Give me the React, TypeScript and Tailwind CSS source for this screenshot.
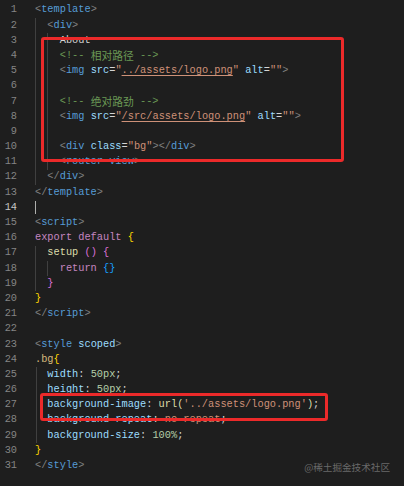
import React from "react";

type Tok = [string, string, boolean?];

const P = "#808080";
const TAG = "#569cd6";
const ATTR = "#9cdcfe";
const STR = "#ce9178";
const CMT = "#6a9955";
const TXT = "#d4d4d4";
const KW = "#c586c0";
const FN = "#dcdcaa";
const B1 = "#ffd700";
const B2 = "#da70d6";
const B3 = "#179fff";
const SEL = "#d7ba7d";
const NUM = "#b5cea8";

const sp = (n: number): Tok => [" ".repeat(n), TXT];

const lines: Tok[][] = [
  [["<", P], ["template", TAG], [">", P]],
  [sp(2), ["<", P], ["div", TAG], [">", P]],
  [sp(4), ["About", TXT]],
  [sp(4), ["<!-- ", CMT], ["相对路径", CMT + "|cjk"], [" -->", CMT]],
  [sp(4), ["<", P], ["img", TAG], [" ", TXT], ["src", ATTR], ["=", TXT], ['"', STR], ["../assets/logo.png", STR, true], ['"', STR], [" ", TXT], ["alt", ATTR], ["=", TXT], ['""', STR], [">", P]],
  [],
  [sp(4), ["<!-- ", CMT], ["绝对路劲", CMT + "|cjk"], [" -->", CMT]],
  [sp(4), ["<", P], ["img", TAG], [" ", TXT], ["src", ATTR], ["=", TXT], ['"', STR], ["/src/assets/logo.png", STR, true], ['"', STR], [" ", TXT], ["alt", ATTR], ["=", TXT], ['""', STR], [">", P]],
  [],
  [sp(4), ["<", P], ["div", TAG], [" ", TXT], ["class", ATTR], ["=", TXT], ['"bg"', STR], ["></", P], ["div", TAG], [">", P]],
  [sp(4), ["<", P], ["router-view", TAG], [">", P]],
  [sp(2), ["</", P], ["div", TAG], [">", P]],
  [["</", P], ["template", TAG], [">", P]],
  [],
  [["<", P], ["script", TAG], [">", P]],
  [["export", KW], [" ", TXT], ["default", KW], [" ", TXT], ["{", B1]],
  [sp(2), ["setup", FN], [" ", TXT], ["()", B2], [" ", TXT], ["{", B2]],
  [sp(4), ["return", KW], [" ", TXT], ["{}", B3]],
  [sp(2), ["}", B2]],
  [["}", B1]],
  [["</", P], ["script", TAG], [">", P]],
  [],
  [["<", P], ["style", TAG], [" ", TXT], ["scoped", ATTR], [">", P]],
  [[".bg", SEL], ["{", B1]],
  [sp(2), ["width", ATTR], [": ", TXT], ["50px", NUM], [";", TXT]],
  [sp(2), ["height", ATTR], [": ", TXT], ["50px", NUM], [";", TXT]],
  [sp(2), ["background-image", ATTR], [": ", TXT], ["url(", FN], ["'../assets/logo.png'", STR], [")", FN], [";", TXT]],
  [sp(2), ["background-repeat", ATTR], [": ", TXT], ["no-repeat", STR], [";", TXT]],
  [sp(2), ["background-size", ATTR], [": ", TXT], ["100%", NUM], [";", TXT]],
  [["}", B1]],
  [["</", P], ["style", TAG], [">", P]],
];

// indent guides: [lineIndexStart, lineIndexEnd (inclusive), x]
const guides: [number, number, number][] = [
  [1, 11, 35],
  [2, 10, 47],
  [16, 18, 35],
  [17, 17, 47],
  [24, 28, 36],
];

const LH = 15.2;
const TOP = 2.4;

export default function App() {
  return (
    <div
      className="relative w-[404px] h-[486px] overflow-hidden bg-[#1e1e1e]"
      style={{ fontFamily: '"Liberation Mono", "DejaVu Sans Mono", monospace' }}
    >
      <div className="pt-[2.4px]">
        {lines.map((toks, i) => (
          <div key={i} className="flex h-[15.2px] leading-[15.2px] text-[10.3px] whitespace-pre">
            <div
              className={`w-[17px] text-right shrink-0 ${i === 13 ? "text-[#c6c6c6]" : "text-[#858585]"}`}
            >
              {i + 1}
            </div>
            <div className="pl-[18px] flex">
              {toks.map((t, j) => {
                const [text, colorRaw, underline] = t;
                const cjk = colorRaw.endsWith("|cjk");
                const color = colorRaw.replace("|cjk", "");
                return (
                  <span
                    key={j}
                    className={`${underline ? "underline decoration-[#ce9178] underline-offset-[2px]" : ""} ${cjk ? "text-[10.8px]" : ""}`}
                    style={{
                      color,
                      fontFamily: cjk ? '"Noto Sans CJK SC", sans-serif' : undefined,
                    }}
                  >
                    {text}
                  </span>
                );
              })}
            </div>
          </div>
        ))}
      </div>

      {/* indent guides */}
      {guides.map(([a, b, x], k) => (
        <div
          key={k}
          className="absolute w-px bg-[#404040]"
          style={{ left: x, top: TOP + a * LH, height: (b - a + 1) * LH }}
        />
      ))}

      {/* cursor on line 14 */}
      <div className="absolute w-px bg-[#aeafad]" style={{ left: 35, top: TOP + 13 * LH + 1, height: LH - 2 }} />

      {/* red highlight boxes */}
      <div className="absolute left-[41px] top-[37px] w-[303px] h-[125px] border-[3px] border-[#ec2a2a] rounded-[3px]" />
      <div className="absolute left-[40px] top-[393px] w-[288px] h-[28px] border-[3px] border-[#ec2a2a] rounded-[3px]" />

      {/* watermark */}
      <div
        className="absolute right-[14px] top-[459px] whitespace-nowrap text-[9.6px] leading-[16px] text-[#6a6a6a]"
        style={{ fontFamily: '"Noto Sans CJK SC", sans-serif' }}
      >
        @稀土掘金技术社区
      </div>
    </div>
  );
}
